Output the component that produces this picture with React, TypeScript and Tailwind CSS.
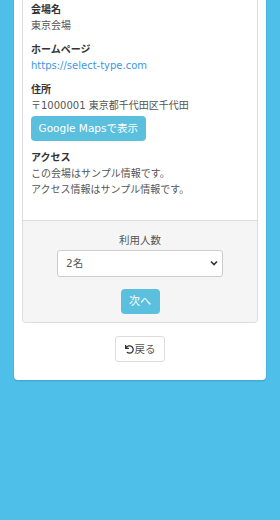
import { FaUndo } from 'react-icons/fa';

const font = { fontFamily: '"DejaVu Sans", "Noto Sans CJK JP", sans-serif' };

const InfoBlock = (props: { label: string; children: React.ReactNode; className?: string }) => {
  return (
    <div className={props.className ?? 'mb-[8px]'}>
      <div className="text-[10px] leading-[16px] font-bold text-[#333]">{props.label}</div>
      {props.children}
    </div>
  );
};

export default function App() {
  return (
    <div className="min-h-screen bg-[#4dbfe8] px-[14px]" style={font}>
      <div className="bg-white rounded-b-[4px] px-[8px] pb-[18px] shadow-[0_1px_2px_rgba(0,0,0,0.15)]">
        <div className="border-x border-b border-[#dddddd] rounded-b-[4px] overflow-hidden">
          <div className="px-[8px] pt-[2px] pb-[14px]">
            <InfoBlock label="会場名">
              <div className="text-[10px] leading-[16px] text-[#555]">東京会場</div>
            </InfoBlock>
            <InfoBlock label="ホームページ">
              <div className="text-[10px] leading-[16px] text-[#3a97e6]">https://select-type.com</div>
            </InfoBlock>
            <InfoBlock label="住所" className="mb-[9px]">
              <div className="text-[10px] leading-[16px] text-[#555]">〒1000001 東京都千代田区千代田</div>
              <button className="mt-[2px] h-[25px] px-[7.5px] rounded-[4px] bg-[#5bc0de] text-white text-[10.5px] leading-[25px]">
                Google Mapsで表示
              </button>
            </InfoBlock>
            <InfoBlock label="アクセス">
              <div className="text-[10px] leading-[16px] text-[#555]">
                この会場はサンプル情報です。
                <br />
                アクセス情報はサンプル情報です。
              </div>
            </InfoBlock>
          </div>

          <div className="border-t border-[#dddddd] bg-[#f5f5f5] pt-[11px] pb-[8px] flex flex-col items-center">
            <div className="text-[10.5px] leading-[16px] text-[#555]">利用人数</div>
            <div className="relative mt-[2px] w-[166px]">
              <select
                defaultValue="2"
                className="appearance-none w-full h-[27px] rounded-[3px] border border-[#cccccc] bg-white pl-[8px] text-[10.5px] text-[#555] outline-none"
                style={font}
              >
                <option value="1">1名</option>
                <option value="2">2名</option>
                <option value="3">3名</option>
              </select>
              <svg
                className="absolute right-[5px] top-[10px] pointer-events-none"
                width="8"
                height="6"
                viewBox="0 0 8 6"
              >
                <path d="M1 1.5 L4 4.5 L7 1.5" fill="none" stroke="#333" strokeWidth="1.6" />
              </svg>
            </div>
            <button className="mt-[12px] h-[25px] w-[39px] rounded-[4px] bg-[#5bc0de] text-white text-[11px] leading-[25px]">
              次へ
            </button>
          </div>
        </div>

        <div className="flex justify-center mt-[13px]">
          <button className="h-[26px] w-[50px] rounded-[3px] border border-[#dddddd] bg-white flex items-center justify-center gap-[1px] text-[10.5px] text-[#555]">
            <FaUndo className="text-[9px] text-[#333]" />
            戻る
          </button>
        </div>
      </div>
    </div>
  );
}
